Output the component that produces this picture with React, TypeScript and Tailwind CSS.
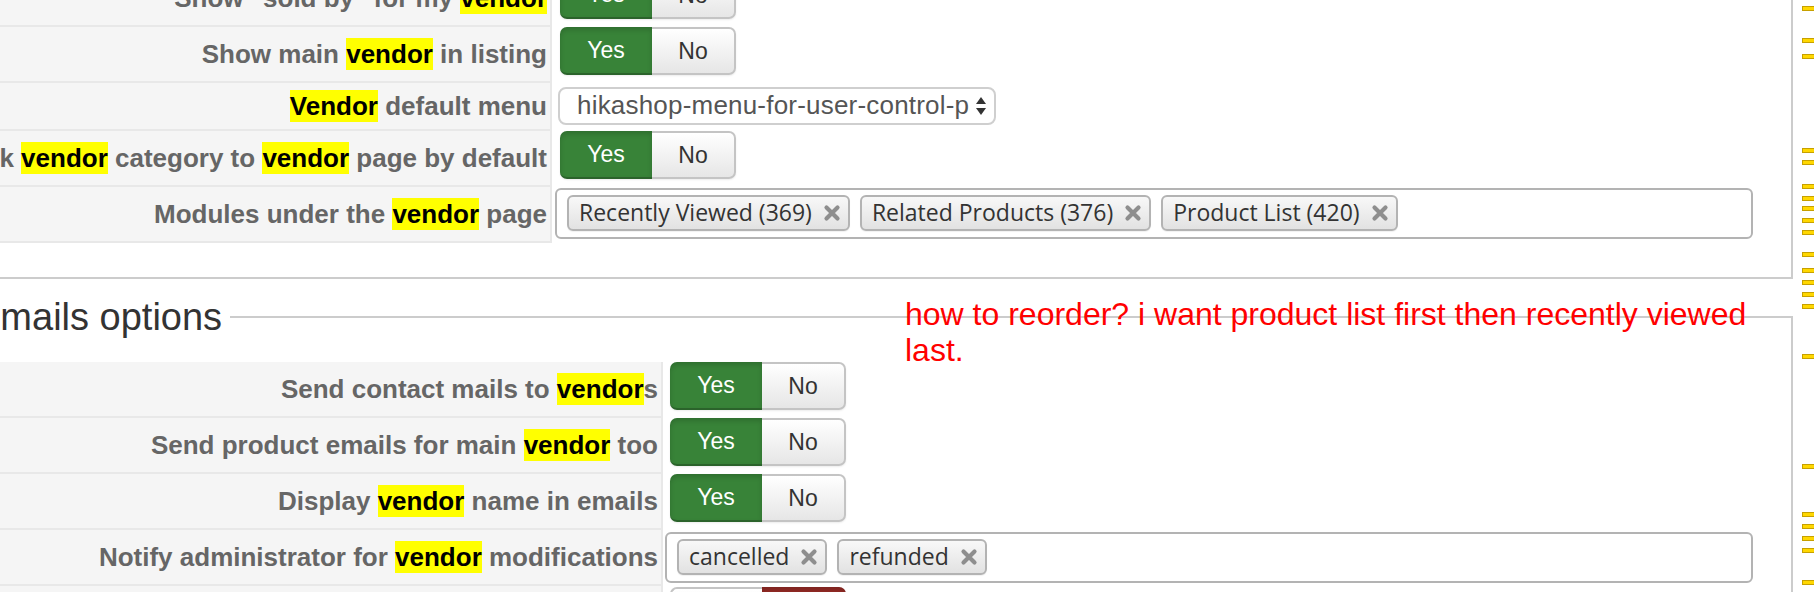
import React from "react";

const Hl = ({ children }: { children: React.ReactNode }) => (
  <span className="bg-[#ffff00] py-[1px] text-black">{children}</span>
);

function LabelCell({ width, height, children }: { width: string; height: string; children?: React.ReactNode }) {
  return (
    <div
      className={`${width} ${height} flex shrink-0 items-center justify-end overflow-hidden whitespace-nowrap border-r-2 border-b-2 border-[#e8e8e8] bg-[#f5f5f5] pr-[3px] text-[26px] font-bold text-[#666]`}
    >
      <span className="shrink-0">{children}</span>
    </div>
  );
}

function Toggle({ value }: { value: "yes" | "no" }) {
  const yesActive = value === "yes";
  return (
    <div className="flex h-[48px] w-[176px] rounded-[7px] text-[23px] leading-none shadow-[0_1px_2px_rgba(0,0,0,0.08)]">
      <div
        className={
          yesActive
            ? "flex w-[92px] items-center justify-center rounded-l-[7px] border-b-2 border-[#2b632b] bg-[#388338] text-white shadow-[inset_0_3px_5px_rgba(0,0,0,0.16)]"
            : "flex w-[92px] items-center justify-center rounded-l-[7px] border-2 border-r-0 border-[#c4c4c4] bg-linear-to-b from-white to-[#e6e6e6] text-[#333]"
        }
      >
        Yes
      </div>
      <div
        className={
          yesActive
            ? "flex flex-1 items-center justify-center rounded-r-[7px] border-2 border-l-0 border-[#c4c4c4] bg-linear-to-b from-white to-[#e6e6e6] text-[#333]"
            : "flex flex-1 items-center justify-center rounded-r-[7px] border-b-2 border-[#6e1d1a] bg-[#942a25] text-white shadow-[inset_0_3px_5px_rgba(0,0,0,0.16)]"
        }
      >
        No
      </div>
    </div>
  );
}

function XIcon() {
  return (
    <svg width="18" height="18" viewBox="0 0 18 18" className="ml-[11px] shrink-0">
      <path d="M3.5 3.5 L14.5 14.5 M14.5 3.5 L3.5 14.5" stroke="#8e8e8e" strokeWidth="4.2" strokeLinecap="round" />
    </svg>
  );
}

function Chip({ text }: { text: string }) {
  return (
    <div className="flex h-[36px] shrink-0 items-center rounded-[6px] border-2 border-[#b3b3b3] bg-linear-to-b from-[#f8f8f8] to-[#e2e2e2] pl-[10px] pr-[7px] font-['Open_Sans',sans-serif] text-[23px] leading-none text-[#333] shadow-[0_1px_1px_rgba(0,0,0,0.06)]">
      <span className="-mt-[2px]">{text}</span>
      <XIcon />
    </div>
  );
}

function TagInput({ width, margin, chips }: { width: string; margin: string; chips: string[] }) {
  return (
    <div className={`${width} ${margin} flex h-[51px] items-start gap-[10px] rounded-[6px] border-2 border-[#b3b3b3] bg-white pl-[10px] pt-[5px]`}>
      {chips.map((c) => (
        <Chip key={c} text={c} />
      ))}
    </div>
  );
}

function SelectBox() {
  return (
    <div className="ml-[6px] mt-[4px] flex h-[38px] w-[438px] items-center rounded-[8px] border-2 border-[#cfcfcf] bg-white pl-[17px] text-[26px] leading-none text-[#555]">
      <span className="w-[393px] overflow-hidden whitespace-nowrap pb-[2px] tracking-[0.2px]">hikashop-menu-for-user-control-panel</span>
      <svg width="12" height="20" viewBox="0 0 12 20" className="ml-[5px]">
        <path d="M6 1 L11 8 L1 8 Z" fill="#333" />
        <path d="M6 19 L11 12 L1 12 Z" fill="#333" />
      </svg>
    </div>
  );
}

const marks = [8, 40, 56, 150, 162, 186, 198, 208, 220, 232, 254, 270, 282, 294, 306, 356, 466, 514, 526, 538, 550, 582];

export default function App() {
  return (
    <div className="relative h-[592px] w-[1814px] overflow-hidden bg-white font-['Liberation_Sans',Arial,sans-serif]">
      {/* Section 1 */}
      <div className="-mt-[29px] w-[1793px] border-r-2 border-b-2 border-[#cccccc] pb-[34px]">
        <div className="flex">
          <LabelCell width="w-[552px]" height="h-[56px]">
            Show "sold by" for my <Hl>vendor</Hl>
          </LabelCell>
          <div className="ml-[8px]">
            <Toggle value="yes" />
          </div>
        </div>
        <div className="flex">
          <LabelCell width="w-[552px]" height="h-[56px]">
            Show main <Hl>vendor</Hl> in listing
          </LabelCell>
          <div className="ml-[8px]">
            <Toggle value="yes" />
          </div>
        </div>
        <div className="flex">
          <LabelCell width="w-[552px]" height="h-[48px]">
            <Hl>Vendor</Hl> default menu
          </LabelCell>
          <SelectBox />
        </div>
        <div className="flex">
          <LabelCell width="w-[552px]" height="h-[56px]">
            Link <Hl>vendor</Hl> category to <Hl>vendor</Hl> page by default
          </LabelCell>
          <div className="ml-[8px]">
            <Toggle value="yes" />
          </div>
        </div>
        <div className="flex">
          <LabelCell width="w-[552px]" height="h-[56px]">
            Modules under the <Hl>vendor</Hl> page
          </LabelCell>
          <TagInput
            width="w-[1198px]"
            margin="ml-[3px] mt-[1px]"
            chips={["Recently Viewed (369)", "Related Products (376)", "Product List (420)"]}
          />
        </div>
      </div>

      {/* Section 2 */}
      <div className="mt-[19px] w-[1793px]">
        <div className="flex h-[38px]">
          <span className="-ml-[25px] whitespace-nowrap pr-[8px] text-[38px] leading-[38px] text-[#333]">Emails options</span>
          <div className="mt-[18px] flex-1 border-t-2 border-r-2 border-[#cccccc]" />
        </div>
        <div className="border-r-2 border-[#cccccc] pt-[26px]">
          <div className="flex">
            <LabelCell width="w-[663px]" height="h-[56px]">
              Send contact mails to <Hl>vendor</Hl>s
            </LabelCell>
            <div className="ml-[7px]">
              <Toggle value="yes" />
            </div>
          </div>
          <div className="flex">
            <LabelCell width="w-[663px]" height="h-[56px]">
              Send product emails for main <Hl>vendor</Hl> too
            </LabelCell>
            <div className="ml-[7px]">
              <Toggle value="yes" />
            </div>
          </div>
          <div className="flex">
            <LabelCell width="w-[663px]" height="h-[56px]">
              Display <Hl>vendor</Hl> name in emails
            </LabelCell>
            <div className="ml-[7px]">
              <Toggle value="yes" />
            </div>
          </div>
          <div className="flex">
            <LabelCell width="w-[663px]" height="h-[56px]">
              Notify administrator for <Hl>vendor</Hl> modifications
            </LabelCell>
            <TagInput width="w-[1088px]" margin="ml-[2px] mt-[2px]" chips={["cancelled", "refunded"]} />
          </div>
          <div className="flex">
            <LabelCell width="w-[663px]" height="h-[56px]" />
            <div className="ml-[7px] mt-[1px]">
              <Toggle value="no" />
            </div>
          </div>
        </div>
      </div>

      {/* Annotation */}
      <div className="absolute left-[905px] top-[296px] w-[870px] text-[32px] leading-[36px] text-[#ff0000]">
        how to reorder? i want product list first then recently viewed last.
      </div>

      {/* Scrollbar search markers */}
      <div className="absolute right-0 top-0 h-full w-[12px]">
        {marks.map((m) => (
          <div
            key={m}
            className="absolute left-0 h-[5px] w-[14px] border border-[#c6a000] bg-[#ffd700]"
            style={{ top: m - 2 }}
          />
        ))}
      </div>
    </div>
  );
}
